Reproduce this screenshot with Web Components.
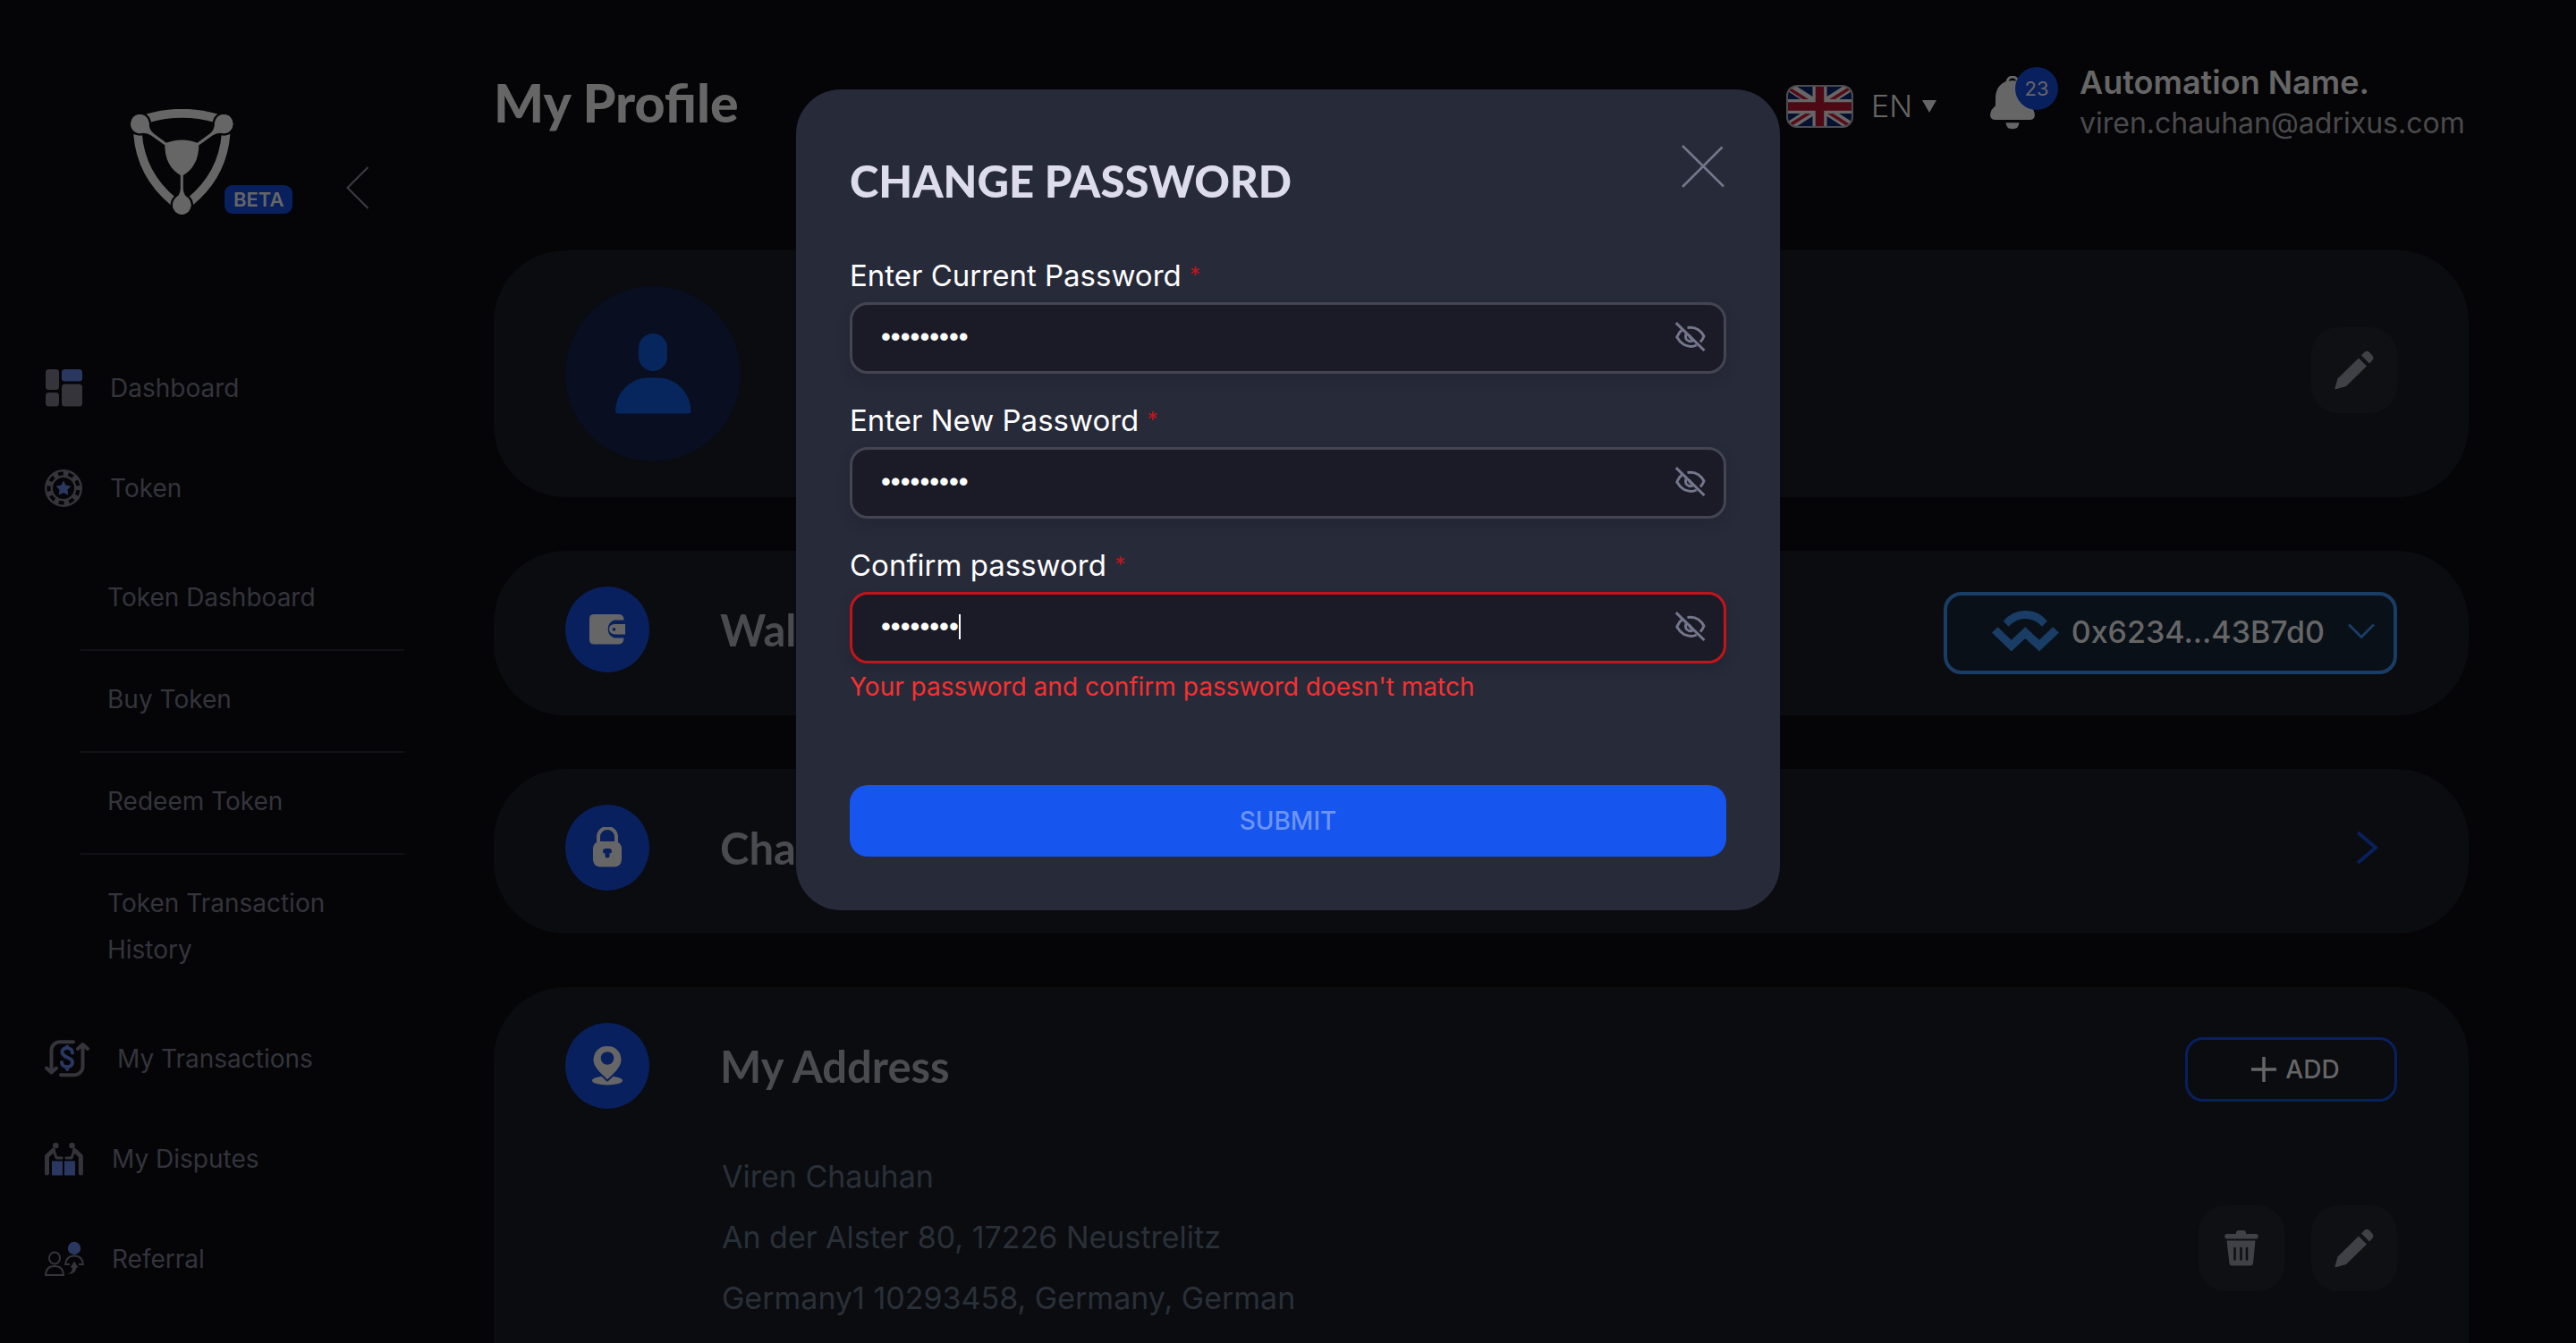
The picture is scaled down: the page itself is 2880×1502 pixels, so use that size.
<!DOCTYPE html>
<html lang="en">
<head>
<meta charset="utf-8">
<title>My Profile</title>
<style>
  html, body { margin: 0; height: 100%; background: #050507; }
  body { font-family: Inter, "Liberation Sans", sans-serif; font-size: 28px; overflow: hidden; }
</style>
</head>
<body>
<profile-page></profile-page>

<script>
const PENCIL = `<svg width="44" height="44" viewBox="0 0 44 44" fill="#404146">
  <path d="M27 8.500 36 17.500 13 40 1.500 43.300Q.3 43.500.5 42.300L3.500 31.500Z"/>
  <path d="M30 5.500 33.300 2Q36.200-.4 39 2L42 5.200Q44.500 8.200 42.300 11L39 14.500Z"/></svg>`;

const ICONS = {
  pencil: PENCIL,
  trash: `<svg width="38" height="40" viewBox="0 0 38 40">
    <path fill="#404146" d="M13 4V3a3 3 0 0 1 3-3h5a3 3 0 0 1 3 3v1h11a2.500 2.500 0 0 1 0 5.500H3A2.500 2.500 0 0 1 3 4ZM2.500 11.500h32L32 37a3 3 0 0 1-3 2.500H8.500a3 3 0 0 1-3-2.500Z"/>
    <path stroke="#0f1014" stroke-width="2.600" stroke-linecap="round" d="M11.500 20v12.500M18.500 20v12.500M25 20v12.500"/></svg>`,
  dashboard: `<svg width="42" height="42" viewBox="0 0 42 42" fill="#34343a">
    <rect x="1" width="15" height="23" rx="3.500"/><rect x="1" y="26" width="15" height="15.500" rx="3.500"/>
    <rect x="19" width="23" height="13.500" rx="3.500" fill="#2a3861"/><rect x="19" y="16.500" width="23" height="25" rx="3.500"/></svg>`,
  token: `<svg width="42" height="42" viewBox="0 0 42 42">
    <circle cx="21" cy="21" r="16.500" fill="none" stroke="#34343a" stroke-width="9"/>
    <circle cx="21" cy="21" r="16.500" fill="none" stroke="#050507" stroke-width="4" stroke-dasharray="6 5.520" stroke-dashoffset="-2"/>
    <path fill="#2a3861" d="m21 13.500 2.400 4.700 5.200.8-3.700 3.700.8 5.200-4.700-2.400-4.700 2.400.8-5.200-3.700-3.700 5.200-.8Z" stroke="#2a3861" stroke-linejoin="round"/></svg>`,
  transactions: `<svg width="50" height="42" viewBox="0 0 50 42" fill="none" stroke-linecap="round" stroke-linejoin="round">
    <g stroke="#34343a" stroke-width="4"><path d="M32 2.200H17A9.500 9.500 0 0 0 7.500 11.700V35M2 31.500l5.500 5 5.500-5"/>
    <path d="M18 39.200h15a9.500 9.500 0 0 0 9.500-9.500V6M37 10l5.500-5L48 10"/></g>
    <path stroke="#2a3861" stroke-width="4" d="M31 14.500c0-7-11.500-7-11.500-1 0 7 11.500 5.500 11.500 11.500 0 7-12 7-12 0M25.200 8.500V7.500M25.200 33v-2"/></svg>`,
  disputes: `<svg width="44" height="38" viewBox="0 0 44 38">
    <g fill="#34343a"><circle cx="12.300" cy="4.200" r="3.300"/><circle cx="30.500" cy="4.200" r="3.300"/></g>
    <g fill="none" stroke="#34343a" stroke-linecap="round" stroke-linejoin="round">
    <path stroke-width="5" d="M2.500 35V16L9.500 9.500M40.300 35V16l-7-6.500"/><path stroke-width="3" d="M10 9.500l3 8.500h6M33 9.500 30 18h-6"/></g>
    <path fill="#2a3861" d="M8 21.500h12v16H8zM22 21.500h12v16H22z"/></svg>`,
  referral: `<svg width="44" height="40" viewBox="0 0 44 40">
    <circle cx="33" cy="8" r="7.200" fill="#2a3861"/>
    <g fill="none" stroke="#34343a" stroke-width="2"><ellipse cx="11" cy="19" rx="6" ry="6.500"/><path d="M1 38Q1.500 28 11 28t10 10Z"/>
    <path d="M28 26H23q1-9.500 10-9.500T43 26h-5"/></g>
    <path fill="#34343a" d="m33 22.500 4.500 7H35.500Q35 37 25.500 37 31 35 31 29.500h-2.500Z"/></svg>`,
  wallet: `<svg width="40" height="34" viewBox="0 0 40 34">
    <path fill="#666" d="M5 0h28q5.500 0 5.500 6.500H28a10.500 10.500 0 0 0 0 20H38.500Q38 33.500 33 33.500H5q-5 0-5-5V5Q0 0 5 0Z"/>
    <path fill="#666" fill-rule="evenodd" d="M28 11h12v11.500H28Q22 21.500 22 16.500T28 11Zm-.5 4a1.800 1.800 0 1 0 .01 0Z"/></svg>`,
  lock: `<svg width="32" height="46" viewBox="0 0 32 46">
    <path fill="none" stroke="#666" stroke-width="4" d="M6 20V11a10 10 0 0 1 20 0v9"/>
    <rect y="16" width="32" height="28.500" rx="8" fill="#666"/>
    <path fill="#09205e" d="M14 24h4a2.600 2.600 0 0 1 .5 5.500v2.500a2.500 2.500 0 0 1-5 0V29.500A2.600 2.600 0 0 1 14 24Z"/></svg>`,
  pin: `<svg width="34" height="44" viewBox="0 0 34 44">
    <ellipse cx="17" cy="38.500" rx="17" ry="5" fill="#666"/>
    <path fill="#666" stroke="#09205e" stroke-width="2" d="M17-1C7-1 .5 6 .5 15.500.5 24 10 32 17 38.500 24 32 33.500 24 33.500 15.500 33.500 6 27-1 17-1Z"/>
    <circle cx="17" cy="13.500" r="7.300" fill="#09205e"/></svg>`,
  person: `<svg width="86" height="90" viewBox="0 0 86 90" fill="#08265e">
    <rect x="27" width="32" height="42" rx="16"/>
    <path d="M36 49.500H50C70 50.500 85 67 85.500 86.500Q85.500 89.500 82.500 89.500H4Q1 89.500 1 86.500 2 66 18 55.500 26 50 36 49.500Z"/></svg>`,
  logo: `<svg width="115" height="118" viewBox="0 0 115 114" preserveAspectRatio="none">
    <g fill="none" stroke="#666" stroke-width="9.600"><path d="M19 10Q57.300-.8 96 10M8 27Q11.500 71 48 100M106.600 27Q103 71 66.600 100"/></g>
    <g fill="#666" stroke="#050507" stroke-width="2.400"><circle cx="10.400" cy="16" r="11.500"/><circle cx="104.200" cy="16" r="11.500"/><circle cx="57.300" cy="103.600" r="11.500"/></g>
    <g fill="#666"><circle cx="10.400" cy="16" r="10.300"/><circle cx="104.200" cy="16" r="10.300"/><circle cx="57.300" cy="103.600" r="10.300"/>
    <path d="M38.300 37Q57.300 29.500 76.300 37 77 62 57.300 72.500 37.500 62 38.300 37Z"/>
    <path d="M20.500 14Q20.500 23 26 26.500L40 36.500 38 39 23 28.500Q18 25 11 26ZM94 14Q94 23 88.600 26.500L74.600 36.500 76.600 39 91.600 28.500Q96.600 25 103.600 26ZM48.500 98Q55.800 93 55.800 86V70h3V86Q58.800 93 66 98Z"/></g></svg>`,
  bell: `<svg width="50" height="60" viewBox="0 0 50 60" fill="#666">
    <path d="M19 7a5.500 5.500 0 0 1 12 0" fill="none" stroke="#666" stroke-width="3"/>
    <path d="M25 5C12 5 6 14 6 25v8L1.500 38Q-1 44 1 47 2.500 49 5 49H45Q47.500 49 49 47 51 44 48.500 38L44 33V25C44 14 38 5 25 5ZM17.500 52.300h15q-.5 7-7.500 7t-7.500-7Z"/></svg>`,
  flag: `<svg width="75" height="48" viewBox="0 0 75 48"><clipPath id="f"><rect x="1" y="1" width="73" height="46" rx="11"/></clipPath>
    <g clip-path="url(#f)"><path fill="#03102f" d="M0 0h75v48H0z"/>
    <path stroke="#666" stroke-width="10" d="M0 0 75 48M75 0 0 48"/>
    <path stroke="#570b18" stroke-width="3.500" d="M-1 1.500 32 22.500M43 28 75 48.500M75 1 45 20M31 28 0 47.500"/>
    <path stroke="#666" stroke-width="16" d="M37.500 0v48M0 24h75"/>
    <path stroke="#4d0914" stroke-width="9.500" d="M37.500 0v48M0 24h75"/></g>
    <rect x="1" y="1" width="73" height="46" rx="11" fill="none" stroke="#4a4b4e" stroke-width="2"/></svg>`,
  connect: `<svg width="75" height="46" viewBox="0 0 75 46" fill="#1a3d66">
    <path d="M12.700 11.700Q22 .3 37.300 0T61.800 11.700L56 17.700Q48 9 37.300 9T18.700 17.700Z"/>
    <path d="m0 24.500 6.500-6.200 15.200 14.400 15.600-14.400 15.700 14.400L68.200 18.300 75 24.500 53 45.500 37.300 31 21.700 45.500Z"/></svg>`,
  eyeOff: `<svg width="34" height="33" viewBox="0 0 34 33" fill="none" stroke="#74768c" stroke-width="3">
    <path d="M8.500 8Q4 11.500 1.800 17q3 5.500 8 8.500 7.500 3.500 14 .5M13.500 6.500Q26 4.500 32 16q-1.300 3.700-4 6.500"/>
    <path d="M12 13.500q-2 6.500 3.500 8 3 .5 4.500-1M16 14.500q0 4 4 5"/><path d="M.8 1.200 32.500 32"/></svg>`,
  plus: `<svg width="28" height="28" viewBox="0 0 28 28"><path stroke="#666" stroke-width="3.500" d="M14 0v28M0 14h28"/></svg>`,
  close: `<svg width="48" height="48" viewBox="0 0 48 48"><path stroke="#74768c" stroke-width="2.600" d="M1 1 47 46.500M45.500 2.500 1 47"/></svg>`,
  chevronRight: `<svg width="26" height="38" viewBox="0 0 26 38"><path fill="none" stroke="#09205e" stroke-width="4" d="M2 2 22 19 2 36"/></svg>`,
  chevronDown: `<svg width="30" height="18" viewBox="0 0 30 18"><path fill="none" stroke="#1a3d66" stroke-width="3" d="M1 1.500 15 15.500 29 1.500"/></svg>`,
  chevronLeft: `<svg width="26" height="48" viewBox="0 0 26 48"><path fill="none" stroke="#3c3d42" stroke-width="2" d="M24.500 1 1.500 24 24.500 47"/></svg>`,
  caretDown: `<svg width="16" height="14" viewBox="0 0 16 14"><path fill="#666" d="M0 0h16L8 14Z"/></svg>`
};

const BASE = `<style>
  * { box-sizing: border-box; }
  :host { display: block; }
  svg { display: block; flex: none; }
  h1, h2, p, ul { margin: 0; padding: 0; font-weight: inherit; }
  a { color: inherit; text-decoration: none; }
  button, input, select { font: inherit; color: inherit; margin: 0; padding: 0; border: 0; background: none; outline: none; }
</style>`;

function define(name, render) {
  customElements.define(name, class extends HTMLElement {
    constructor() {
      super();
      this.attachShadow({ mode: "open" });
    }
    connectedCallback() {
      this.shadowRoot.innerHTML = BASE + render(this);
    }
  });
}

define("nav-item", el => `<style>
    a { display: flex; align-items: center; gap: 31px; height: 112px; padding-left: 50px; line-height: 52px; color: #34343c; }
  </style>
  <a href="#">${ICONS[el.getAttribute("icon")]}<span><slot></slot></span></a>`);

define("nav-sublist", () => `<style>
    :host { padding: 12px 100px 40px 90px; }
  </style><slot></slot>`);

define("nav-subitem", () => `<style>
    :host { border-bottom: 2px solid #101114; }
    :host(:last-child) { border-bottom: 0; }
    a { display: block; padding: 28px 60px 32px 30px; line-height: 52px; color: #34343c; }
    :host(:last-child) a { padding-bottom: 0; }
  </style><a href="#"><slot></slot></a>`);

define("brand-header", () => `<style>
    :host { display: flex; align-items: flex-start; height: 378px; padding: 122px 0 0 146px; }
    .beta { margin-top: 85px; margin-left: -10px; padding: 0 10px; border-radius: 9px; background: #09205e; color: #666; font-size: 22px; font-weight: 600; line-height: 32px; }
    button { margin: 64px 0 0 60px; }
  </style>
  ${ICONS.logo}<span class="beta">BETA</span>
  <button type="button" aria-label="Collapse menu">${ICONS.chevronLeft}</button>`);

define("side-nav", () => `<style>
    :host { width: 552px; flex: none; }
  </style>
  <brand-header></brand-header>
  <nav>
    <nav-item icon="dashboard">Dashboard</nav-item>
    <nav-item icon="token">Token</nav-item>
    <nav-sublist>
      <nav-subitem>Token Dashboard</nav-subitem>
      <nav-subitem>Buy Token</nav-subitem>
      <nav-subitem>Redeem Token</nav-subitem>
      <nav-subitem>Token Transaction History</nav-subitem>
    </nav-sublist>
    <nav-item icon="transactions">My Transactions</nav-item>
    <nav-item icon="disputes">My Disputes</nav-item>
    <nav-item icon="referral">Referral</nav-item>
  </nav>`);

define("language-picker", () => `<style>
    :host { display: flex; align-items: center; gap: 10px; color: #666; font-size: 34px; font-weight: 300; }
    label { margin-right: 10px; }
    select { appearance: none; line-height: 40px; }
  </style>
  <label for="lang" aria-label="Language">${ICONS.flag}</label>
  <select id="lang"><option>EN</option></select>${ICONS.caretDown}`);

define("notification-bell", () => `<style>
    button { display: block; position: relative; }
    span { position: absolute; left: 28px; top: -10px; width: 48px; height: 48px; border-radius: 50%; background: #09205e; color: #666; font-size: 22px; line-height: 48px; text-align: center; }
  </style>
  <button type="button" aria-label="Notifications">${ICONS.bell}<span>23</span></button>`);

define("top-bar", () => `<style>
    :host { display: flex; align-items: center; height: 280px; padding: 60px 0 110px; color: #666; }
    h1 { flex: 1; font: 900 59px/70px Lato, sans-serif; }
    language-picker { margin-top: 8px; }
    notification-bell { margin: 0 50px 0 60px; }
    .user { min-width: 435px; line-height: 46px; }
    .name { font-size: 36px; font-weight: 600; }
    .mail { font-size: 32px; color: #4a4a4c; }
  </style>
  <h1>My Profile</h1>
  <language-picker></language-picker>
  <notification-bell></notification-bell>
  <div class="user"><p class="name">Automation Name.</p><p class="mail">viren.chauhan@adrixus.com</p></div>`);

define("profile-card", () => `<style>
    :host { padding: 40px 80px; border-radius: 80px; background: #0a0c10; }
    .row { display: flex; align-items: center; gap: 80px; min-height: 96px; }
    .lead { flex: 1; display: flex; align-items: center; gap: 79px; }
  </style>
  <div class="row"><div class="lead"><slot name="lead"></slot></div><slot name="action"></slot></div>
  <slot></slot>`);

define("round-icon", el => `<style>
    :host { display: flex; align-items: center; justify-content: center; width: 94px; height: 96px; border-radius: 50%; background: #09205e; }
    :host([large]) { width: 196px; height: 196px; background: #090e20; }
  </style>${ICONS[el.getAttribute("icon")]}`);

define("card-title", () => `<style>
    h2 { font: 700 49px/60px Lato, sans-serif; color: #4a4b50; }
  </style><h2><slot></slot></h2>`);

define("icon-button", el => `<style>
    button { display: flex; align-items: center; justify-content: center; width: 96px; height: 96px; border-radius: 30px; background: #0f1014; }
  </style><button type="button" aria-label="${el.getAttribute("label")}">${ICONS[el.getAttribute("icon")]}</button>`);

define("wallet-button", () => `<style>
    button { display: flex; align-items: center; gap: 14px; height: 92px; padding: 0 21px 4px 50px; border: 4px solid #1a3d66; border-radius: 20px; background: #0a1018; color: #666; font-size: 34px; font-weight: 500; }
    span { margin-right: 12px; }
  </style><button type="button">${ICONS.connect}<span><slot></slot></span>${ICONS.chevronDown}</button>`);

define("add-button", () => `<style>
    button { display: flex; align-items: center; justify-content: center; gap: 10px; width: 237px; height: 72px; padding-left: 10px; border: 3px solid #09205e; border-radius: 20px; color: #666; font-weight: 500; }
  </style><button type="button">${ICONS.plus}<span><slot></slot></span></button>`);

define("address-entry", () => `<style>
    :host { display: flex; align-items: center; padding: 42px 0 100px 175px; }
    .lines { flex: 1; font-size: 34px; line-height: 68px; color: #2a3038; }
    .actions { display: flex; gap: 30px; margin-top: 24px; }
  </style>
  <div class="lines"><slot></slot></div>
  <div class="actions"><icon-button icon="trash" label="Delete address"></icon-button><icon-button icon="pencil" label="Edit address"></icon-button></div>`);

define("password-field", el => `<style>
    :host { line-height: 40px; }
    label { display: block; margin-bottom: 10px; font-size: 33px; color: #fff; }
    sup { font-size: 24px; line-height: 24px; vertical-align: 4px; color: #c4141b; }
    .box { display: flex; align-items: center; height: 80px; padding: 0 20px 3px 32px; border: 3px solid #434552; border-radius: 20px; background: #1a1b26; box-shadow: 0 6px 12px rgba(30, 32, 42, .4); color: #fff; }
    :host([error]) .box { border-color: #c4141b; }
    input { flex: 1; min-width: 0; font: 31px/40px "Liberation Sans", sans-serif; }
    :host([error]) input { flex: none; field-sizing: content; }
    i { width: 2px; height: 28px; margin-right: auto; background: #fff; }
    p { margin-top: 6px; color: #f8312f; }
  </style>
  <label for="pw">${el.getAttribute("label")} <sup>*</sup></label>
  <div class="box"><input id="pw" type="password" value="${el.getAttribute("value")}">${el.hasAttribute("error") ? "<i></i>" : ""}
    <button type="button" aria-label="Show password">${ICONS.eyeOff}</button></div>
  ${el.hasAttribute("error") ? `<p>${el.getAttribute("error")}</p>` : ""}`);

define("password-dialog", () => `<style>
    :host { position: fixed; inset: 0; display: flex; justify-content: center; align-items: flex-start; padding-top: 100px; }
    section { width: 1100px; padding: 60px; border-radius: 50px; background: #272a39; }
    header { display: flex; justify-content: space-between; align-items: flex-start; margin-bottom: 56px; }
    header button { padding: 2px 2px 0 0; }
    h2 { padding-top: 12px; font: 900 49px/60px Lato, sans-serif; color: #dcdcec; }
    form { display: flex; flex-direction: column; gap: 32px; }
    .submit { height: 80px; margin-top: 58px; border-radius: 20px; background: #1755ef; color: #6b94f5; font-weight: 500; }
  </style>
  <section role="dialog" aria-label="Change password">
    <header><h2>CHANGE PASSWORD</h2><button type="button" aria-label="Close">${ICONS.close}</button></header>
    <form>
      <password-field label="Enter Current Password" value="passw0rd1"></password-field>
      <password-field label="Enter New Password" value="passw0rd2"></password-field>
      <password-field label="Confirm password" value="passw0rd" error="Your password and confirm password doesn't match"></password-field>
      <button class="submit" type="button" disabled>SUBMIT</button>
    </form>
  </section>`);

define("profile-page", () => `<style>
    :host { display: flex; height: 100vh; overflow: hidden; background: #050507; }
    main { flex: 1; padding-right: 120px; }
    .cards { display: flex; flex-direction: column; gap: 60px; }
    .slim { padding: 40px 80px 48px; }
    .next { margin-right: 20px; }
    wallet-button, add-button { margin: 4px 0 -4px; }
    .edit { margin-bottom: 8px; }
  </style>
  <side-nav></side-nav>
  <main>
    <top-bar></top-bar>
    <div class="cards">
      <profile-card>
        <round-icon slot="lead" icon="person" large></round-icon>
        <icon-button class="edit" slot="action" icon="pencil" label="Edit profile"></icon-button>
      </profile-card>
      <profile-card class="slim">
        <round-icon slot="lead" icon="wallet"></round-icon><card-title slot="lead">Wallet</card-title>
        <wallet-button slot="action">0x6234...43B7d0</wallet-button>
      </profile-card>
      <profile-card class="slim">
        <round-icon slot="lead" icon="lock"></round-icon><card-title slot="lead">Change Password</card-title>
        <button class="next" slot="action" type="button" aria-label="Change password">${ICONS.chevronRight}</button>
      </profile-card>
      <profile-card>
        <round-icon slot="lead" icon="pin"></round-icon><card-title slot="lead">My Address</card-title>
        <add-button slot="action">ADD</add-button>
        <address-entry><p>Viren Chauhan</p><p>An der Alster 80, 17226 Neustrelitz</p><p>Germany1 10293458, Germany, German</p></address-entry>
      </profile-card>
    </div>
  </main>
  <password-dialog></password-dialog>`);
</script>
</body>
</html>
